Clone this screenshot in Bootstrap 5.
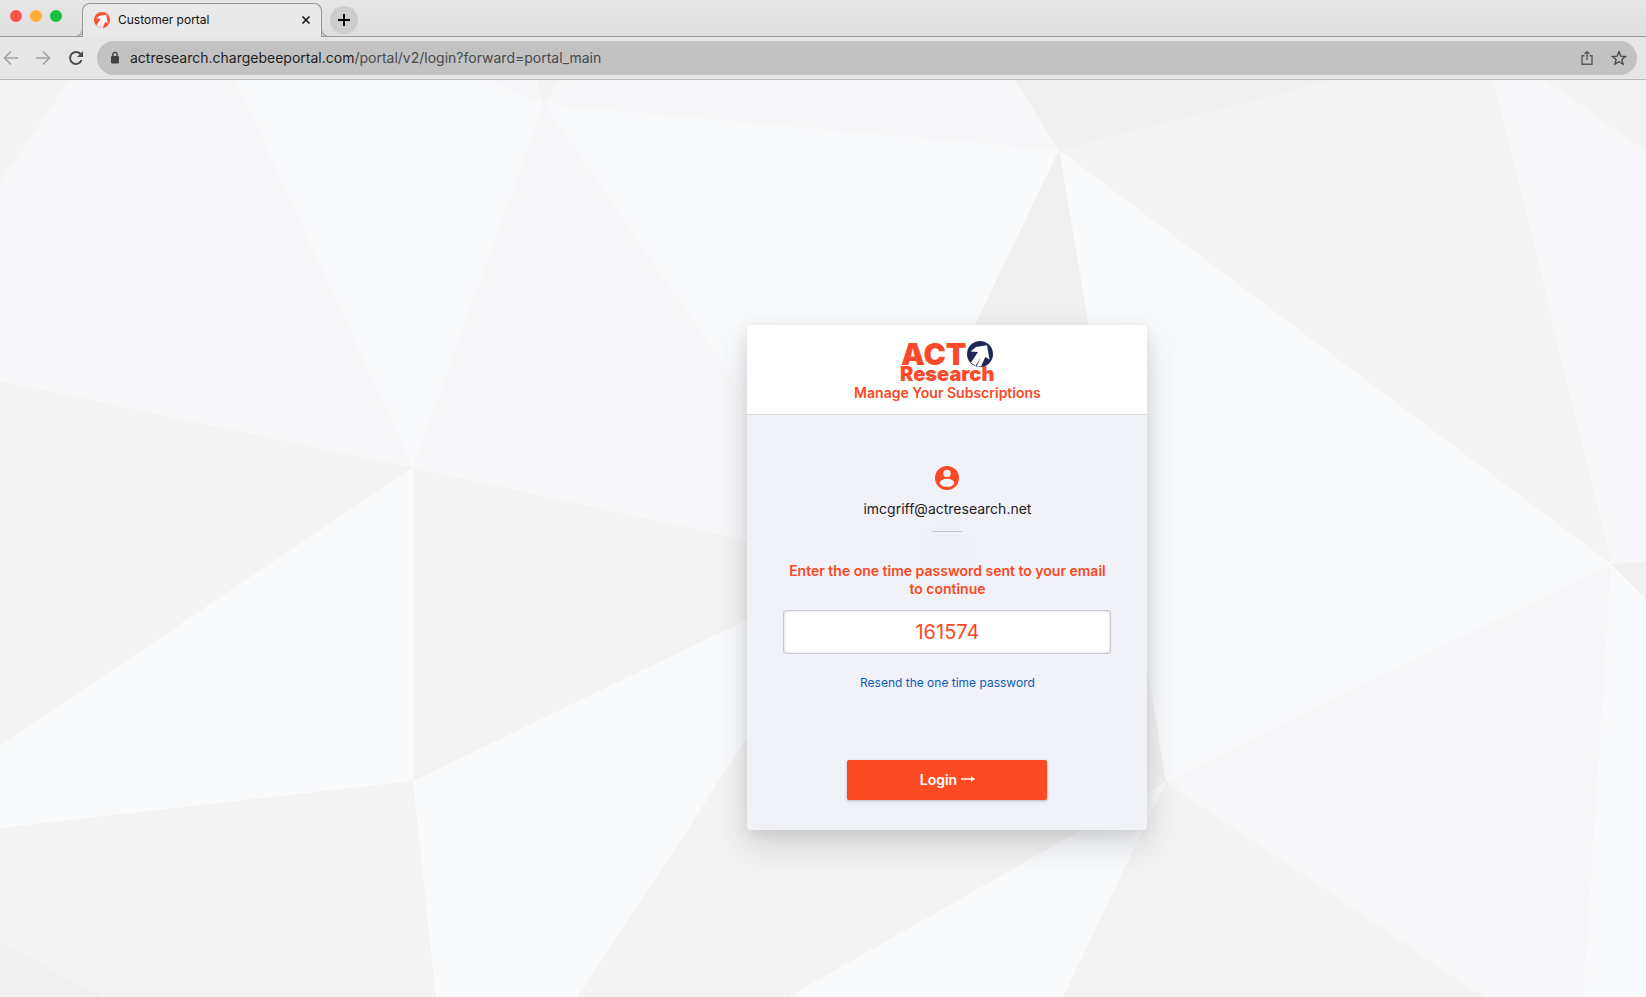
<!DOCTYPE html>
<html lang="en">
<head>
<meta charset="utf-8">
<meta name="viewport" content="width=device-width, initial-scale=1">
<title>Customer portal</title>
<link href="https://cdn.jsdelivr.net/npm/bootstrap@5.3.0/dist/css/bootstrap.min.css" rel="stylesheet">
<style>
  :root { --brand: #fb4924; --edge: #989898; }
  body { font-family: Inter, "Liberation Sans", sans-serif; font-size: 14px; line-height: 20px; color: #1f2024; }
  svg { display: block; flex: none; }
  .plain { border: 0; background: none; padding: 0; color: inherit; }

  .tab-strip { height: 37px; background: linear-gradient(#e6e6e6, #dfdfdf); border-bottom: 1px solid var(--edge); padding-left: 10px; }
  .lights { width: 72px; gap: 8px; padding-top: 10px; }
  .lights button { width: 12px; height: 12px; border-radius: 50%; }
  .page-tab { width: 240px; height: 34px; margin: 3px 0 -1px; padding: 0 10px 2px 11px; background: #e9e9e9; border: 1px solid var(--edge); border-bottom: 0; border-radius: 8px 8px 0 0; font-size: 12px; color: #111; }
  .page-tab::before, .page-tab::after { content: ""; position: absolute; bottom: 0; width: 8px; height: 8px; border-bottom: 1px solid var(--edge); background: #dfdfdf; }
  .page-tab::before { right: 100%; border-right: 1px solid var(--edge); border-bottom-right-radius: 8px; }
  .page-tab::after { left: 100%; border-left: 1px solid var(--edge); border-bottom-left-radius: 8px; }
  .new-tab { width: 28px; height: 28px; margin: 6px 0 0 8px; border-radius: 50%; background: #cdcdcd; }

  .toolbar { height: 43px; background: #e6e6e6; border-bottom: 1px solid #b9b9b9; padding: 0 9px 0 2px; }
  .nav-keys { width: 95px; gap: 15px; }
  .address { height: 34px; border-radius: 17px; background: #c2c2c2; padding: 0 10px 0 11px; color: #47494d; }
  .address b { font-weight: 400; color: #1d1e20; }

  .portal { background: #f3f3f3; padding: 78px 0 0 calc(15% + 2px); }
  .facets { width: 100%; height: 100%; z-index: 0; }
  .login-card { width: 400px; z-index: 1; border-radius: 4px; background: #f1f2f8; box-shadow: 0 15px 35px rgba(40, 45, 50, .16), 0 5px 15px rgba(0, 0, 0, .08); }
  .login-head { background: #fff; border-radius: 4px 4px 0 0; border-bottom: 1px solid #dadbdf; padding: 16px 0 9px; }
  .login-head svg { overflow: visible; }
  .login-head h1 { font-size: 14px; line-height: 24px; font-weight: 600; color: var(--brand); }
  .login-body { padding: 51px 36px 30px; }
  .account { margin-top: 9px; }
  .rule { width: 30px; height: 1px; background: #c4c5ca; margin-top: 12px; }
  .halo { width: 60px; height: 60px; border-radius: 50%; top: 105px; left: 50%; margin-left: -30px; background: radial-gradient(#eff0f6 14px, #f0f1f7 15px); }
  .prompt { font-weight: 600; line-height: 18px; color: var(--brand); margin: 30px 0 12px; }
  .otp { height: 44px; border: 1px solid #cbcbcf; border-radius: 3px; box-shadow: inset 0 0 3px rgba(0, 0, 0, .2); color: var(--brand); font-size: 20px; text-align: center; padding: 0 12px; }
  .resend { font-size: 12px; line-height: 18px; color: #0b5cb8; margin-top: 20px; }
  .sign-in { width: 200px; height: 40px; margin-top: 68px; border: 0; border-radius: 2px; background: #fc4a22; color: #fff; font-size: 14px; font-weight: 600; padding: 0 0 2px; box-shadow: 0 1px 3px rgba(0, 0, 0, .25); }
</style>
</head>
<body class="d-flex flex-column min-vh-100">

<header>
  <div class="tab-strip d-flex align-items-start">
    <div class="lights d-flex">
      <button class="plain" style="background:#ff544e" aria-label="Close window"></button>
      <button class="plain" style="background:#feb136" aria-label="Minimize window"></button>
      <button class="plain" style="background:#19bf40" aria-label="Zoom window"></button>
    </div>
    <div class="page-tab position-relative d-flex align-items-center gap-2">
      <svg width="16" height="16" viewBox="0 0 26 26"><circle cx="13" cy="13" r="13" fill="#fb4f30"/><path fill="#fff" d="M3.500 10.500 9 6 20 4.300 22.500 18.500 18.300 16 14 25.500 9.500 25.500 14 16 8.500 25 4 21.500 11 11z"/></svg>
      <span class="flex-grow-1">Customer portal</span>
      <button class="plain" aria-label="Close tab"><svg width="10" height="10" viewBox="0 0 10 10" stroke="#111" stroke-width="1.600"><path d="M1.500 1.500l7 7M8.500 1.500l-7 7"/></svg></button>
    </div>
    <button class="plain new-tab d-flex align-items-center justify-content-center" aria-label="New tab"><svg width="12" height="12" viewBox="0 0 12 12" stroke="#000" stroke-width="2"><path d="M6 0v12M0 6h12"/></svg></button>
  </div>

  <nav class="toolbar d-flex align-items-center" aria-label="Browser">
    <div class="nav-keys d-flex align-items-center">
      <button class="plain" aria-label="Back"><svg width="18" height="16" viewBox="0 0 18 16" fill="none" stroke="#a3a3a3" stroke-width="1.700"><path d="M16 8H3M9 1.500 2.500 8 9 14.500"/></svg></button>
      <button class="plain" aria-label="Forward"><svg width="18" height="16" viewBox="0 0 18 16" fill="none" stroke="#a3a3a3" stroke-width="1.700"><path d="M1 8h13M8 1.500 14.500 8 8 14.500"/></svg></button>
      <button class="plain" aria-label="Reload"><svg width="16" height="16" viewBox="0 0 16 16"><path d="M13.600 10.200A6 6 0 1 1 12.600 4" fill="none" stroke="#4b4d50" stroke-width="2"/><path d="M15 1v6H9z" fill="#4b4d50"/></svg></button>
    </div>
    <div class="address d-flex align-items-center flex-grow-1">
      <svg width="14" height="14" viewBox="0 0 14 14"><rect x="3" y="5" width="8" height="7.500" rx="1" fill="#404246"/><path d="M4.800 5.500V3.600a2.200 2.200 0 0 1 4.400 0v1.900" fill="none" stroke="#404246" stroke-width="1.400"/></svg>
      <div class="flex-grow-1 ps-2" role="textbox" contenteditable="true" aria-label="Address" spellcheck="false"><b>actresearch.chargebeeportal.com</b>/portal/v2/login?forward=portal_main</div>
      <div class="d-flex gap-3">
        <button class="plain" aria-label="Share"><svg width="16" height="16" viewBox="0 0 16 16" fill="none" stroke="#5a5b5d" stroke-width="1.400"><path d="M5.500 5.700H3v8.600h10V5.700h-2.500M8 10V2M5.500 4 8 1.500 10.500 4"/></svg></button>
        <button class="plain" aria-label="Bookmark"><svg width="16" height="16" viewBox="0 0 16 16" fill="none" stroke="#47494c" stroke-width="1.400"><path d="M8 1.800l1.800 4.300 4.700.4-3.600 3 1.100 4.600L8 11.700l-4 2.400 1.100-4.600-3.600-3 4.700-.4z"/></svg></button>
      </div>
    </div>
  </nav>
</header>

<main class="portal position-relative flex-grow-1 d-flex align-items-center justify-content-center">
  <svg class="facets position-absolute top-0 start-0" viewBox="0 0 1646 917" preserveAspectRatio="xMidYMid slice" aria-hidden="true">
    <g fill="#f7f7f9">
      <path d="M0 102 70 0H235L413 388 0 301z"/>
      <path d="M413 388 544 24 860 485z"/>
      <path d="M491 0h45l8 24z"/>
      <path d="M544 24 561 0h454l44 70z"/>
      <path d="M1494 0h51l101 72v410l-35 2z"/>
      <path d="M1166 702 1611 484 1583 917H1484z"/>
    </g>
    <g fill="#f9fafc">
      <path d="M235 0H491L544 24 413 388z"/>
      <path d="M544 24 1059 70 860 485z"/>
      <path d="M1059 70 1611 484 1166 702z"/>
      <path d="M0 665 413 388V701L0 748z"/>
      <path d="M413 701 860 485 578 917H436z"/>
      <path d="M1166 702 788 917h275z"/>
      <path d="M1611 484 1646 519V917h-63z"/>
    </g>
    <g fill="#f0f0f0">
      <path d="M1015 0h317L1059 70z"/>
      <path d="M1059 70 1166 702 860 485z"/>
      <path d="M1611 484l35-2v37z"/>
      <path d="M0 862 101 917H0z"/>
    </g>
  </svg>

  <form class="login-card position-relative">
    <div class="login-head text-center">
      <svg class="mx-auto" width="92" height="40" viewBox="0 0 92 40" role="img" aria-label="ACT Research">
        <g fill="#fb4a2b" font-family="Inter, sans-serif" font-weight="900">
          <text x="0" y="24" font-size="30">ACT</text>
          <text x="-1" y="40" font-size="20">Research</text>
        </g>
        <g transform="translate(66)"><circle cx="13" cy="13" r="13" fill="#1f2757"/><path fill="#fff" d="M3.500 10.500 9 6 20 4.300 22.500 18.500 18.300 16 14 25.500 9.500 25.500 14 16 8.500 25 4 21.500 11 11z"/></g>
      </svg>
      <h1 class="mb-0">Manage Your Subscriptions</h1>
    </div>
    <div class="login-body position-relative d-flex flex-column align-items-center text-center">
      <div class="halo position-absolute"></div>
      <svg width="24" height="24" viewBox="0 0 24 24"><circle cx="12" cy="12" r="12" fill="#fb4924"/><circle cx="12" cy="7.400" r="3.700" fill="#f1f2f8"/><ellipse cx="12" cy="16.800" rx="7.200" ry="4" fill="#f1f2f8"/></svg>
      <div class="account position-relative">imcgriff@actresearch.net</div>
      <div class="rule position-relative"></div>
      <label class="prompt position-relative" for="otp">Enter the one time password sent to your email to continue</label>
      <input class="otp form-control" id="otp" type="text" inputmode="numeric" value="161574">
      <a class="resend text-decoration-none" href="#">Resend the one time password</a>
      <button class="sign-in btn d-flex align-items-center justify-content-center gap-1" type="submit">Login
        <svg width="14" height="8" viewBox="0 0 14 8" fill="#fff"><path d="M0 3.300h10V1.300L14 4l-4 2.700v-2H0z"/></svg>
      </button>
    </div>
  </form>
</main>

<script src="https://cdn.jsdelivr.net/npm/bootstrap@5.3.0/dist/js/bootstrap.bundle.min.js"></script>
</body>
</html>
